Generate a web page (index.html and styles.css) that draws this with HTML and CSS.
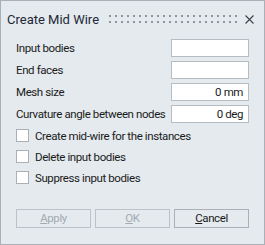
FILE: index.html
```html
<!DOCTYPE HTML>
<html>
<head>
 <title>Create Mid Wire</title>
 <meta name="viewport" content="width=device-width, initial-scale=1">
 <link rel="stylesheet" href="styles.css">
</head>

<body>
<div class="dialog">
  <div class="titlebar">
    <span class="title">Create Mid Wire</span>
    <div class="grip"></div>
    <svg class="close" width="9" height="9" viewBox="0 0 9 9">
      <path d="M0.5 0.5 L8.5 8.5 M8.5 0.5 L0.5 8.5" stroke="#3c4248" stroke-width="1.1" fill="none"/>
    </svg>
  </div>

  <div class="fields">
    <label>Input bodies</label>
    <div class="field"></div>
    <label>End faces</label>
    <div class="field"></div>
    <label>Mesh size</label>
    <div class="field">0 mm</div>
    <label>Curvature angle between nodes</label>
    <div class="field">0 deg</div>
  </div>

  <div class="checks">
    <div class="check"><span class="box"></span>Create mid-wire for the instances</div>
    <div class="check"><span class="box"></span>Delete input bodies</div>
    <div class="check"><span class="box"></span>Suppress input bodies</div>
  </div>

  <div class="buttons">
    <div class="btn disabled"><u>A</u>pply</div>
    <div class="btn disabled"><u>O</u>K</div>
    <div class="btn"><u>C</u>ancel</div>
  </div>
</div>
</body>
</html>
```

FILE: styles.css
```css
body{
 margin:0;
 font-family:Roboto, "Liberation Sans", sans-serif;
 font-size:11.5px;
 letter-spacing:-0.4px;
 color:#1b1b1b;
}

.dialog{
 width:265px;
 height:245px;
 box-sizing:border-box;
 border:1px solid #a9b0b6;
 background-color:#e4eaee;
 display:flex;
 flex-direction:column;
}

.titlebar{
 height:36px;
 display:flex;
 align-items:center;
 padding:0 10px 0 6px;
}
.title{
 font-size:13px;
 letter-spacing:0;
 color:#1e2838;
}
.grip{
 width:128px;
 height:8px;
 margin-left:auto;
 margin-right:8px;
 background-image:radial-gradient(circle, #8e959b 0.9px, transparent 1.3px);
 background-size:6px 6px;
 background-position:-2px -2px;
}
.close{
 display:block;
}

.fields{
 margin-top:2px;
 padding:0 15px;
 display:grid;
 grid-template-columns:1fr 78px;
 grid-auto-rows:18px;
 row-gap:4px;
 align-items:center;
}
.fields label{
 white-space:nowrap;
}
.field{
 height:18px;
 box-sizing:border-box;
 border:1px solid #b6bdc2;
 background-color:#fff;
 text-align:right;
 padding-right:5px;
 line-height:16px;
}

.checks{
 margin-top:6px;
 padding:0 15px;
 display:flex;
 flex-direction:column;
 gap:8px;
}
.check{
 display:flex;
 align-items:center;
 height:13px;
 white-space:nowrap;
}
.box{
 width:13px;
 height:13px;
 box-sizing:border-box;
 border:1px solid #a9b0b6;
 background-color:#fff;
 margin-right:6px;
}

.buttons{
 margin-top:auto;
 padding:0 15px 16px;
 display:flex;
 gap:4px;
}
.btn{
 width:75px;
 height:19px;
 box-sizing:border-box;
 border:1px solid #a9b0b6;
 text-align:center;
 line-height:17px;
}
.btn.disabled{
 border-color:#bcc3c8;
 color:#a3abb1;
}
```
